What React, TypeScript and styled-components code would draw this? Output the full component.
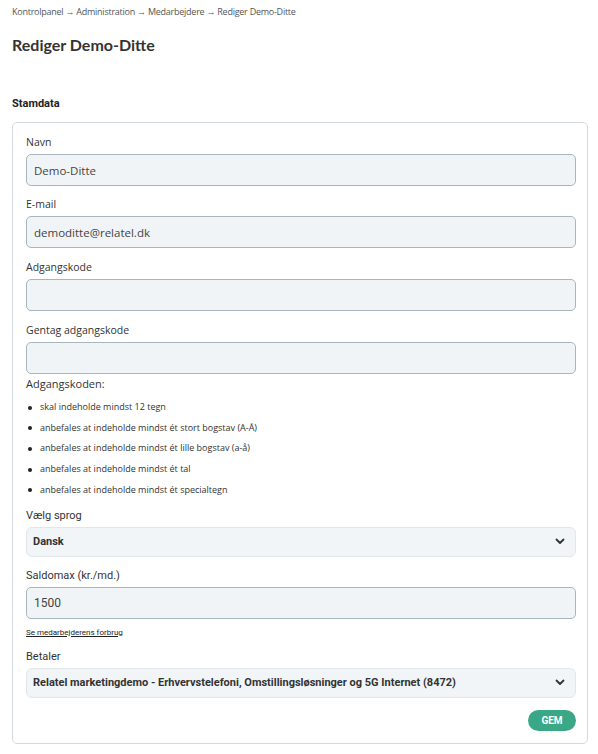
import React from "react";
import styled, { createGlobalStyle } from "styled-components";

const Global = createGlobalStyle`
  html, body { margin: 0; padding: 0; background: #fff; }
  body { font-family: "Open Sans", "Noto Sans", sans-serif; color: #333; }
`;

const NARROW = `"Roboto", "Liberation Sans", sans-serif`;

const Page = styled.div`
  padding: 6px 10px 10px 12px;
  width: 576px;
`;

const Breadcrumb = styled.div`
  font-size: 9px;
  color: #555;
  line-height: 12px;
  letter-spacing: -0.25px;
`;

const Title = styled.h1`
  margin: 17px 0 0;
  font-family: "Lato", sans-serif;
  font-weight: 700;
  font-size: 16px;
  line-height: 20px;
  color: #333;
`;

const SectionTitle = styled.h2`
  margin: 42px 0 0;
  font-family: ${NARROW};
  font-weight: 700;
  font-size: 11px;
  line-height: 14px;
  color: #222;
`;

const Card = styled.form`
  margin-top: 11px;
  border: 1px solid #d3dadf;
  border-radius: 5px;
  padding: 12px 11px 12px 13px;
  display: flex;
  flex-direction: column;
`;

const Field = styled.div<{ $mt?: number }>`
  display: flex;
  flex-direction: column;
  margin-top: ${(p) => p.$mt ?? 0}px;
`;

const Label = styled.label<{ $narrow?: boolean }>`
  font-size: ${(p) => (p.$narrow ? 11 : 10.5)}px;
  line-height: 14px;
  color: #333;
  margin-bottom: ${(p) => (p.$narrow ? 4 : 5)}px;
  font-family: ${(p) => (p.$narrow ? NARROW : `"Open Sans", sans-serif`)};
`;

const Input = styled.input<{ $narrow?: boolean }>`
  box-sizing: border-box;
  height: 32px;
  width: 100%;
  border: 1px solid #a9b5bd;
  border-radius: 5px;
  background: #f1f4f6;
  padding: 0 7px;
  font-family: ${(p) => (p.$narrow ? NARROW : `"Open Sans", sans-serif`)};
  font-size: ${(p) => (p.$narrow ? 12 : 11.5)}px;
  color: #444;
  outline: none;
`;

const SelectBox = styled.div`
  box-sizing: border-box;
  height: 30px;
  width: 100%;
  border: 1px solid #e2e7ea;
  border-radius: 6px;
  background: #f2f5f7;
  padding: 0 10px 0 6px;
  display: flex;
  align-items: center;
  justify-content: space-between;
  font-family: ${NARROW};
  font-weight: 700;
  font-size: 11px;
  color: #333;
`;

const Hint = styled.div`
  font-size: 11px;
  line-height: 14px;
  color: #333;
  margin-top: 3px;
`;

const Rules = styled.ul`
  margin: 5px 0 0;
  padding: 0 0 0 14px;
  list-style: none;
`;

const Rule = styled.li`
  position: relative;
  font-size: 9px;
  line-height: 12px;
  color: #333;
  margin-top: 8.7px;
  &:first-child { margin-top: 5px; }
  &::before {
    content: "";
    position: absolute;
    left: -12px;
    top: 4.5px;
    width: 4px;
    height: 4px;
    border-radius: 50%;
    background: #222;
  }
`;

const SmallLink = styled.a`
  margin-top: 9px;
  font-family: ${NARROW};
  font-size: 8px;
  line-height: 10px;
  color: #222;
  text-decoration: underline;
  align-self: flex-start;
`;

const Actions = styled.div`
  display: flex;
  justify-content: flex-end;
  margin-top: 12px;
`;

const Button = styled.button`
  height: 21px;
  width: 48px;
  border: none;
  border-radius: 11px;
  background: #3aa887;
  color: #fff;
  font-family: ${NARROW};
  font-weight: 700;
  font-size: 10px;
  padding: 0;
`;

const Chevron = () => (
  <svg width="10" height="7" viewBox="0 0 10 7">
    <path d="M1.5 1.5 L5 5 L8.5 1.5" fill="none" stroke="#333" strokeWidth="1.8" strokeLinecap="round" strokeLinejoin="round" />
  </svg>
);

export default function App() {
  return (
    <Page>
      <Global />
      <Breadcrumb>Kontrolpanel → Administration → Medarbejdere → Rediger Demo-Ditte</Breadcrumb>
      <Title>Rediger Demo-Ditte</Title>
      <SectionTitle>Stamdata</SectionTitle>
      <Card onSubmit={(e) => e.preventDefault()}>
        <Field>
          <Label>Navn</Label>
          <Input defaultValue="Demo-Ditte" />
        </Field>
        <Field $mt={11}>
          <Label>E-mail</Label>
          <Input defaultValue="demoditte@relatel.dk" />
        </Field>
        <Field $mt={12}>
          <Label>Adgangskode</Label>
          <Input type="password" />
        </Field>
        <Field $mt={12}>
          <Label>Gentag adgangskode</Label>
          <Input type="password" />
        </Field>
        <Hint>Adgangskoden:</Hint>
        <Rules>
          <Rule>skal indeholde mindst 12 tegn</Rule>
          <Rule>anbefales at indeholde mindst ét stort bogstav (A-Å)</Rule>
          <Rule>anbefales at indeholde mindst ét lille bogstav (a-å)</Rule>
          <Rule>anbefales at indeholde mindst ét tal</Rule>
          <Rule>anbefales at indeholde mindst ét specialtegn</Rule>
        </Rules>
        <Field $mt={13}>
          <Label $narrow>Vælg sprog</Label>
          <SelectBox>
            <span>Dansk</span>
            <Chevron />
          </SelectBox>
        </Field>
        <Field $mt={12}>
          <Label $narrow>Saldomax (kr./md.)</Label>
          <Input $narrow defaultValue="1500" />
        </Field>
        <SmallLink href="#">Se medarbejderens forbrug</SmallLink>
        <Field $mt={12}>
          <Label $narrow>Betaler</Label>
          <SelectBox>
            <span>Relatel marketingdemo - Erhvervstelefoni, Omstillingsløsninger og 5G Internet (8472)</span>
            <Chevron />
          </SelectBox>
        </Field>
        <Actions>
          <Button type="submit">GEM</Button>
        </Actions>
      </Card>
    </Page>
  );
}
